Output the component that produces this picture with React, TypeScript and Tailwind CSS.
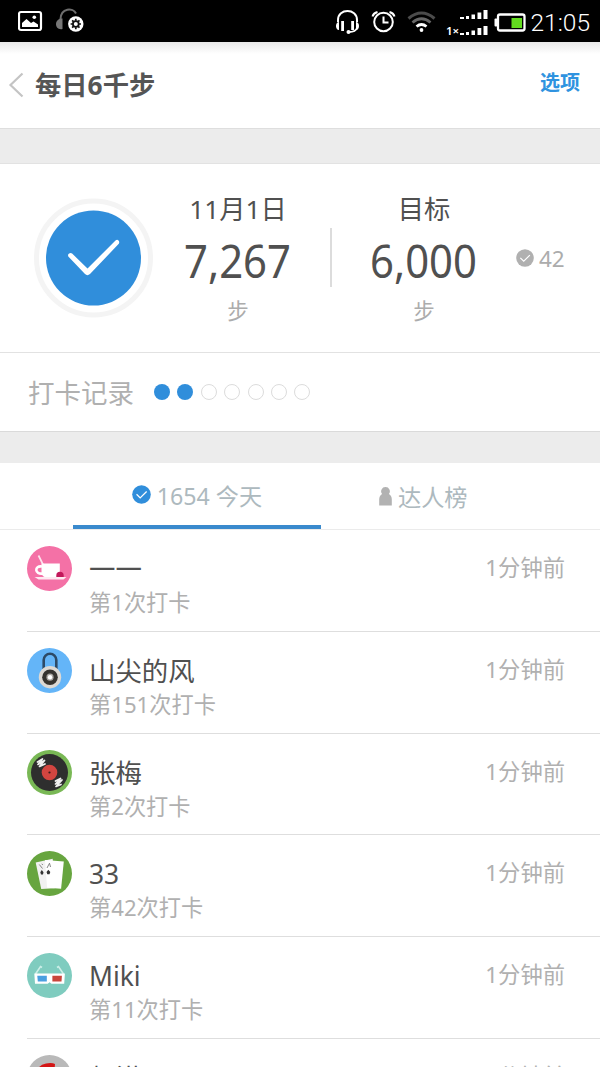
import React from "react";

const CheckBadge = ({ size, fill }: { size: number; fill: string }) => (
  <svg width={size} height={size} viewBox="0 0 20 20" className="shrink-0">
    <circle cx="10" cy="10" r="9.8" fill={fill} />
    <path d="M4.800 9.800l3.800 3.800 6.800-6.800" fill="none" stroke="#fff" strokeWidth="1.3" />
  </svg>
);

const Cup = () => (
  <>
    <circle cx="22.5" cy="22.5" r="22.5" fill="#f471a6" />
    <path d="M11.5 9.500l4.500 9" stroke="#fde3ed" strokeWidth="1.700" />
    <path d="M14.500 17.500h18.300v13.500h-15.300q-3-1-3-6z" fill="#fff" />
    <path d="M15 20.500c-8-1.300-7.500 8.500 1 7" fill="none" stroke="#fff" strokeWidth="2.600" />
    <path d="M7.500 31h32l-3 2.500h-25z" fill="#fdeaf1" />
    <path d="M29.300 31v-1.500a3.700 3.700 0 0 1 7.400 0V31z" fill="#c2185b" />
  </>
);

const Lock = () => (
  <>
    <circle cx="22.5" cy="22.5" r="22.5" fill="#64b5f8" />
    <path d="M16.700 21v-9a6.300 6.300 0 0 1 12.600 0v9" fill="none" stroke="#2d4a66" strokeWidth="2.600" />
    <circle cx="23" cy="29.200" r="11.200" fill="#dcd9d4" />
    <circle cx="23" cy="29.200" r="7.800" fill="#35332f" />
    <circle cx="23" cy="29.200" r="3.600" fill="#a9a6a1" />
    <circle cx="23" cy="29.200" r="2.200" fill="#fff" />
  </>
);

const Vinyl = () => (
  <>
    <circle cx="22.5" cy="22.5" r="22.5" fill="#79b855" />
    <circle cx="22.5" cy="22.5" r="18.500" fill="#2e2e2e" />
    <circle cx="22.5" cy="22.5" r="7.800" fill="#d24540" />
    <circle cx="22.5" cy="22.5" r="1.100" fill="#3a1a1a" />
    <path
      d="M10.500 12l5-3-4.500 5.500 6.500-4-5 6 5.500-2.500M28.500 31l5-2.500-5 5.500 6.500-4-6 6.500 5-2"
      fill="none"
      stroke="#f0f0f0"
      strokeWidth="1.700"
      strokeLinecap="round"
      strokeLinejoin="round"
    />
  </>
);

const Cards = () => (
  <>
    <circle cx="22.5" cy="22.5" r="22.5" fill="#67a53f" />
    <path d="M8.700 11.500l17-3.800 2 29.500-13.500.8z" fill="#f1f1f1" />
    <path d="M18 9l18.800 1.500-2.700 27.300-14-1z" fill="#fff" />
    <path d="M12.300 13.500l3.200 4M14.800 12.800l1 1.200M20 17l2.500-4.800 1 3.800" fill="none" stroke="#777" strokeWidth=".9" />
    <path d="M14.800 19l1.700 2.200-.5 2.300h-2l-.7-2.300zM21.300 18.800l2 2.200-.8 2.300h-2.200l-.8-2.300z" fill="#333" />
  </>
);

const Glasses = () => (
  <>
    <circle cx="22.5" cy="22.5" r="22.5" fill="#7fccbf" />
    <path d="M8.500 21l5-7.500 1.500 1M36.500 21l-5-7.500-1.500 1" fill="none" stroke="#cbeee7" strokeWidth="1.600" />
    <path d="M7.300 20.500h30.600l-.7 10.300H24.500l-1.900-1.500-1.900 1.500H8z" fill="#fff" />
    <path d="M10.300 22.700h9.500v5.800h-9z" fill="#4a9fe0" />
    <path d="M25.400 22.700h9.500l-.4 5.800h-9.100z" fill="#c9453b" />
  </>
);

const RedHat = () => (
  <>
    <circle cx="22.5" cy="22.5" r="22.5" fill="#b9b9b9" />
    <path d="M9 20q1-10 10-11.500 6-1 9 .5l-1 11z" fill="#d31515" />
  </>
);

const rows = [
  { name: "一一", count: "第1次打卡", art: <Cup /> },
  { name: "山尖的风", count: "第151次打卡", art: <Lock /> },
  { name: "张梅", count: "第2次打卡", art: <Vinyl /> },
  { name: "33", count: "第42次打卡", art: <Cards /> },
  { name: "Miki", count: "第11次打卡", art: <Glasses /> },
  { name: "赵洪", count: "第1次打卡", art: <RedHat /> },
];

const StatusBar = () => (
  <div className="flex h-[42px] shrink-0 items-center bg-black pl-[18px] pr-[10px]">
    <svg width="66" height="42" viewBox="18 0 66 42">
      <rect x="19" y="12" width="22" height="18" rx="2" fill="none" stroke="#fff" strokeWidth="2.200" />
      <path d="M22 27v-4l4.500-4 4.500 4 2.500-1.500 4.500 3V27z" fill="#fff" />
      <circle cx="34.300" cy="17.300" r="1.800" fill="#fff" />
      <path d="M60.500 19c.5-11.500 12.500-11.500 15.500-5.500" fill="none" stroke="#6e6e6e" strokeWidth="2" />
      <path d="M62.500 18.500v10.500c-4 1-6.500-1.500-6.500-5s3-5.500 6.500-5.500z" fill="#777" />
      <circle cx="75.800" cy="24" r="7.700" fill="#fff" />
      <circle cx="75.800" cy="24" r="2.900" fill="none" stroke="#111" strokeWidth="1.800" />
      <path d="M75.800 18.800v2M75.800 27.200v2M70.600 24h2M79 24h2M72.100 20.300l1.400 1.400M78.100 26.300l1.400 1.400M72.100 27.700l1.400-1.400M78.100 21.700l1.400-1.400" stroke="#111" strokeWidth="1.700" />
    </svg>
    <svg className="ml-auto" width="195" height="42" viewBox="334 0 195 42">
      <g fill="none" stroke="#fff">
        <path d="M338 22v-2c0-12 19-12 19 0v2" strokeWidth="2" />
        <path d="M357 28c-1 3-4 4-8 4" strokeWidth="1.800" />
        <path d="M342.600 21v10M352.600 21v9" strokeWidth="2.800" />
        <circle cx="383.500" cy="22" r="9.300" strokeWidth="2" />
        <path d="M383.500 16.500v6h5M372.500 16.500q1-3.500 5-4.500M394.500 16.500q-1-3.500-5-4.500" strokeWidth="2" />
        <path d="M408.500 18.500q13-11 26 0" stroke="#4b4b4b" strokeWidth="3" />
        <path d="M412.500 22.500q9-7.500 18 0" stroke="#666" strokeWidth="2.800" />
        <path d="M416.500 26.500q5-4 10 0" strokeWidth="2.800" />
      </g>
      <path d="M339 22v8c-4 0-4-8 0-8zM356 22v8c4 0 4-8 0-8z" fill="#fff" />
      <circle cx="348.500" cy="32" r="2" fill="#fff" />
      <circle cx="421.500" cy="30" r="1.900" fill="#fff" />
      <path
        fill="#fff"
        d="M460 17h4v2h-4zM466 16h3v3h-3zM471.500 14.500h3.500V19h-3.500zM477.500 12.500h3.800V19h-3.800zM483.500 10h4v9h-4zM460 33h4v2h-4zM466 32h3v3h-3zM471.500 30.500h3.500V35h-3.500zM477.500 28h3.800v7h-3.800zM483.500 26h4v9h-4z"
      />
      <text x="446" y="35" fontSize="11.500" fontWeight="600" fontFamily="Noto Sans, sans-serif" fill="#fff">1×</text>
      <rect x="498" y="14.500" width="26.500" height="16" rx="2" fill="none" stroke="#fff" strokeWidth="2.300" />
      <rect x="494.500" y="18.500" width="3" height="8" rx="1" fill="#fff" />
      <rect x="511.500" y="18" width="10.500" height="10" fill="#62dc1e" />
    </svg>
    <div className="ml-px w-[60px] whitespace-nowrap pt-[4px] text-right font-['Roboto',sans-serif] text-[24.500px] font-light leading-[42px] text-white">21:05</div>
  </div>
);

const Stat = ({ label, value }: { label: string; value: string }) => (
  <div className="flex w-[186px] flex-col items-center text-[#505050]">
    <div className="h-[36px] text-[26.300px] leading-[36px]">{label}</div>
    <div className="mt-[2px] h-[64px] origin-center scale-x-[0.930] text-[45px] leading-[64px]">{value}</div>
    <div className="mt-[3px] h-[30px] text-[21.500px] leading-[30px] text-[#acacac]">步</div>
  </div>
);

export default function App() {
  return (
    <div className="flex h-[1067px] w-[600px] flex-col overflow-hidden bg-white font-['Noto_Sans','Noto_Sans_CJK_SC',sans-serif]">
      <StatusBar />
      <header className="flex h-[87px] shrink-0 items-center border-b border-[#dedede] bg-linear-to-b from-[#e9e9e9] to-white to-[12px] px-[8px]">
        <svg width="17" height="28" viewBox="0 0 17 28" fill="none" stroke="#c4c4c4" strokeWidth="2.200">
          <path d="M14.500 2.500L2.500 14 14.500 25.500" />
        </svg>
        <h1 className="ml-[10px] text-[26.300px] font-bold leading-[40px] text-[#555]">每日6千步</h1>
        <button className="ml-auto mr-[12px] pb-[5px] text-[20px] font-bold leading-[30px] text-[#2f93e0]">选项</button>
      </header>
      <div className="h-[34px] shrink-0 bg-[#ececec]" />
      <section className="flex h-[190px] shrink-0 border-y border-[#e2e2e2]">
        <svg className="ml-[34px] mt-[34px] shrink-0" width="120" height="120" viewBox="0 0 120 120">
          <circle cx="59.500" cy="60" r="57" fill="none" stroke="#f4f4f4" strokeWidth="5" />
          <circle cx="59.500" cy="60" r="47.500" fill="#308edb" />
          <path d="M34.300 58.500q-.8-2 .8-3t3 0L53.500 70.500 81.500 42.500q1.700-1.300 3 0t.3 3.300L56 76q-2.700 2.300-5 0z" fill="#fff" />
        </svg>
        <div className="-ml-[9px] flex pt-[27px]">
          <Stat label="11月1日" value="7,267" />
          <div className="-ml-px -mr-px mt-[37px] h-[59px] w-[2px] bg-[#dcdcdc]" />
          <Stat label="目标" value="6,000" />
        </div>
        <div className="-ml-px mt-[79px] flex h-[30px] items-center gap-[5px] text-[22.500px] leading-[28px] text-[#acacac]">
          <CheckBadge size={18} fill="#b0b0b0" />
          <span className="pt-[2px]">42</span>
        </div>
      </section>
      <section className="flex h-[78px] shrink-0 items-center pl-[28px]">
        <span className="w-[126px] pt-px text-[26.500px] leading-[40px] text-[#b0b0b0]">打卡记录</span>
        <div className="flex gap-[7.400px]">
          {[0, 1, 2, 3, 4, 5, 6].map((i) => (
            <span key={i} className={i < 2 ? "size-4 rounded-full bg-[#308edb]" : "size-4 rounded-full border border-[#dcdcdc]"} />
          ))}
        </div>
      </section>
      <div className="h-[32px] shrink-0 border-t border-[#dadada] bg-[#ececec]" />
      <nav className="flex h-[67px] shrink-0 border-b border-[#ebebeb] pl-[73px] text-[23.200px] leading-[62px] text-[#adb9be]">
        <div className="flex h-[66px] w-[248px] items-center justify-center gap-[6px] border-b-4 border-[#3a8acd]">
          <div className="pt-px">
            <CheckBadge size={19} fill="#308edb" />
          </div>
          <span className="pt-[4px]">1654 今天</span>
        </div>
        <div className="ml-[58px] flex items-center gap-[6px]">
          <svg width="13" height="19" viewBox="0 0 13 19" fill="#b2b2b2">
            <path d="M6.500 0a4.300 4.300 0 0 1 3.400 7Q13 9 12.800 13v5.500H.2V13Q0 9 3.100 7A4.300 4.300 0 0 1 6.500 0z" />
          </svg>
          <span className="pt-px">达人榜</span>
        </div>
      </nav>
      <main className="pl-[27px]">
        {rows.map((r, i) => (
          <article key={i} className="flex h-[101.800px] border-b border-[#dedede]">
            <svg className="mt-[16px] shrink-0" width="45" height="45" viewBox="0 0 45 45">{r.art}</svg>
            <div className="ml-[17px] flex-1">
              <div className="mt-[21px] h-[36px] text-[26.400px] leading-[36px] text-[#505050]">{r.name}</div>
              <div className="h-[32px] text-[22.200px] leading-[32px] text-[#b0b0b0]">{r.count}</div>
            </div>
            <div className="mr-[35px] mt-[22px] h-[32px] text-[22.300px] leading-[32px] text-[#b0b0b0]">1分钟前</div>
          </article>
        ))}
      </main>
    </div>
  );
}
